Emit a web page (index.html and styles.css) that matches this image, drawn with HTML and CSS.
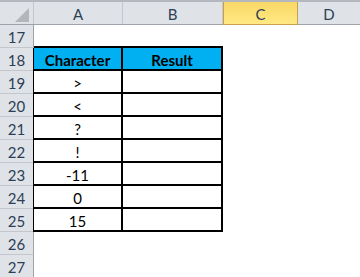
FILE: index.html
```html
<!DOCTYPE html>
<html>
<head>
<meta charset="utf-8">
<link rel="stylesheet" href="styles.css">
</head>
<body>
<div class="sheet">
  <div class="colheads">
    <div class="corner"><span class="tri"></span></div>
    <div class="ch ch-a">A</div>
    <div class="ch ch-b">B</div>
    <div class="ch ch-c sel">C</div>
    <div class="ch ch-d">D</div>
  </div>
  <div class="row">
    <div class="rh">17</div>
    <div class="c a top"></div><div class="c b top"></div><div class="c rest"></div>
  </div>
  <div class="row">
    <div class="rh">18</div>
    <div class="c a t hd first">Character</div><div class="c b t hd">Result</div><div class="c rest"></div>
  </div>
  <div class="row">
    <div class="rh">19</div>
    <div class="c a t first">&gt;</div><div class="c b t"></div><div class="c rest"></div>
  </div>
  <div class="row">
    <div class="rh">20</div>
    <div class="c a t first">&lt;</div><div class="c b t"></div><div class="c rest"></div>
  </div>
  <div class="row">
    <div class="rh">21</div>
    <div class="c a t first">?</div><div class="c b t"></div><div class="c rest"></div>
  </div>
  <div class="row">
    <div class="rh">22</div>
    <div class="c a t first">!</div><div class="c b t"></div><div class="c rest"></div>
  </div>
  <div class="row">
    <div class="rh">23</div>
    <div class="c a t first">-11</div><div class="c b t"></div><div class="c rest"></div>
  </div>
  <div class="row">
    <div class="rh">24</div>
    <div class="c a t first">0</div><div class="c b t"></div><div class="c rest"></div>
  </div>
  <div class="row">
    <div class="rh">25</div>
    <div class="c a t first">15</div><div class="c b t"></div><div class="c rest"></div>
  </div>
  <div class="row">
    <div class="rh">26</div>
    <div class="c a"></div><div class="c b"></div><div class="c rest"></div>
  </div>
  <div class="row">
    <div class="rh">27</div>
    <div class="c a"></div><div class="c b"></div><div class="c rest"></div>
  </div>
</div>
</body>
</html>
```
FILE: styles.css
```css
* { box-sizing: border-box; }
html, body { margin: 0; padding: 0; background: #fff; }
body { width: 360px; height: 277px; overflow: hidden; font-family: Lato, "Open Sans", sans-serif; font-size: 15px; }
.sheet { display: flex; flex-direction: column; }
.colheads { display: flex; height: 25px; border-top: 2px solid #b4b8be; border-bottom: 1px solid #9ea3aa; background: #dfe3e8; }
.corner { width: 34px; border-right: 1px solid #c3c7cd; position: relative; }
.tri { position: absolute; left: 15px; top: 6px; width: 0; height: 0; border-left: 14px solid transparent; border-bottom: 14px solid #b3b7bc; }
.ch { display: flex; align-items: center; justify-content: center; color: #2c3e55; border-right: 1px solid #c3c7cd; padding-top: 1px; }
.ch-a { width: 89px; }
.ch-b { width: 100px; }
.ch-c { width: 75px; }
.ch-d { flex: 1; border-right: none; }
.sel { background: linear-gradient(#f9d766, #ffe983); border: 1px solid #c9a14e; border-top: none; margin-bottom: -1px; }
.row { display: flex; height: 23px; }
.rh { width: 34px; background: #dfe3e8; border-right: 1px solid #9ea3aa; border-bottom: 1px solid #c3c7cd; color: #2c3e55; display: flex; align-items: center; justify-content: center; padding-top: 1px; }
.c { display: flex; align-items: center; justify-content: center; color: #000; }
.a { width: 89px; }
.b { width: 100px; }
.rest { flex: 1; }
.top { border-bottom: 2px solid #000; }
.t { border-bottom: 2px solid #000; border-right: 2px solid #000; padding-top: 2px; }
.first { border-left: 1px solid #000; margin-left: -1px; width: 90px; }
.hd { background: #00b0f0; font-weight: bold; }
```
